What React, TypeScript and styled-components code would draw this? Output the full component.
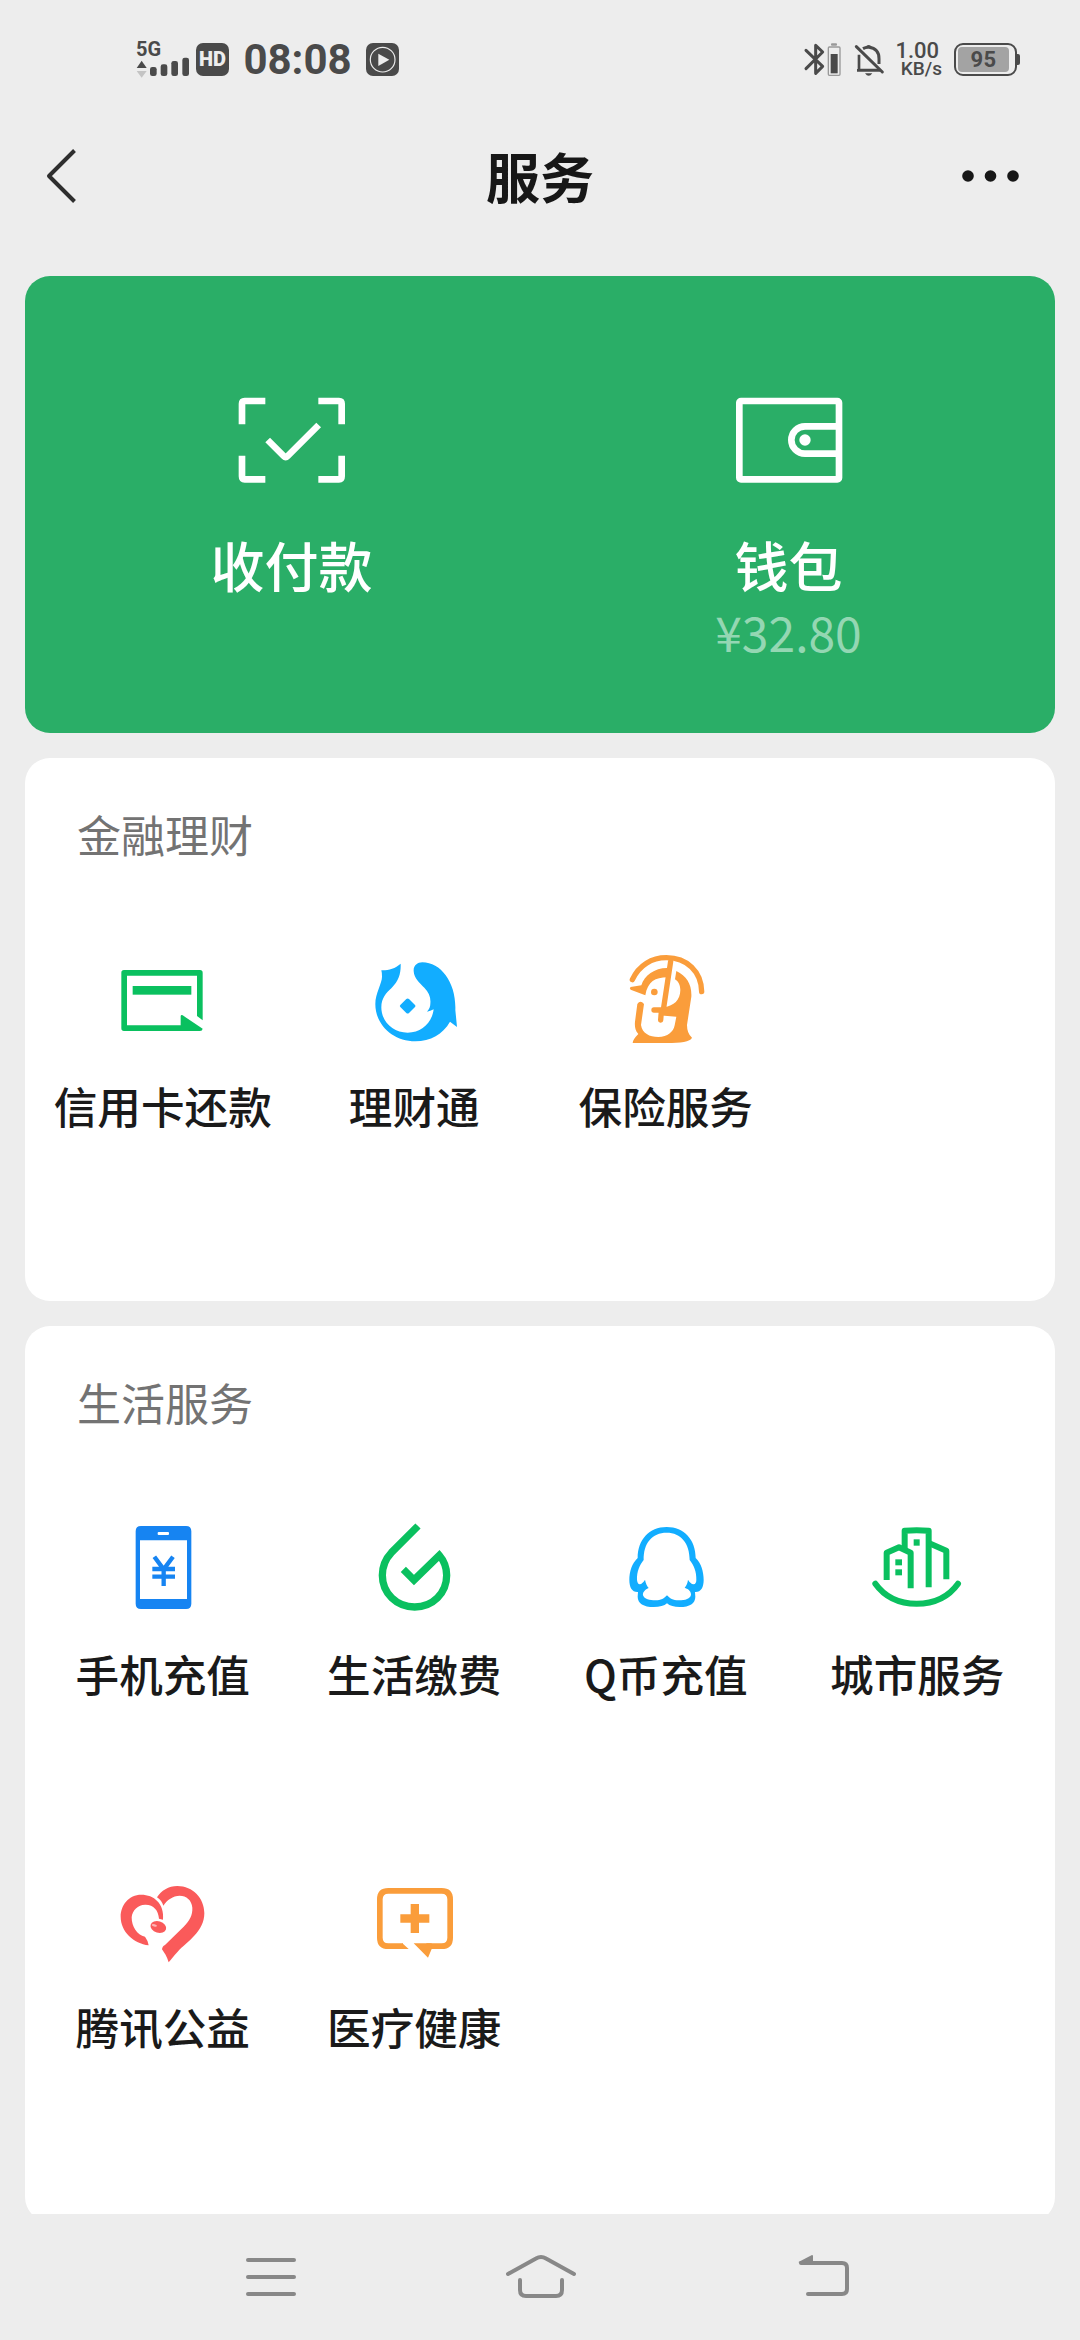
import React from 'react';
import styled, { createGlobalStyle } from 'styled-components';

const GREEN = '#0ac05f';
const BLUE = '#12adff';
const ORANGE = '#fa9d3b';
const INK = '#4a4a4a';

const GlobalStyle = createGlobalStyle`
  * { box-sizing: border-box; }
  body {
    margin: 0;
    background: #ededed;
    font-family: 'Noto Sans CJK SC', 'Noto Sans', sans-serif;
  }
  svg { display: block; flex: none; overflow: visible; }
`;

const Screen = styled.div`
  width: 1080px;
  height: 2340px;
  display: flex;
  flex-direction: column;
  overflow: hidden;
  background: #ededed;
`;

const StatusBar = styled.header`
  flex: none;
  height: 119px;
  padding: 0 60px 0 136px;
  display: flex;
  align-items: center;
  color: ${INK};
  font-family: Roboto, 'Liberation Sans', sans-serif;
`;

const Network = styled.div`
  display: flex;
  flex-direction: column;
  width: 54px;
  margin-right: 6px;
`;

const NetworkType = styled.span`
  height: 16px;
  line-height: 17px;
  font-size: 20px;
  font-weight: 700;
`;

const Badge = styled.span`
  display: flex;
  align-items: center;
  justify-content: center;
  width: 33px;
  height: 33px;
  border-radius: 7px;
  background: ${INK};
  color: #ededed;
  font-size: 20px;
  font-weight: 900;
  line-height: 33px;
`;

const Clock = styled.span`
  width: 137px;
  text-align: center;
  font-size: 42px;
  line-height: 50px;
  font-weight: 700;
`;

const StatusRight = styled.div`
  display: flex;
  align-items: center;
  margin-left: auto;
`;

const Speed = styled.div`
  display: flex;
  flex-direction: column;
  align-items: flex-end;
  width: 48px;
  margin: 0 12px 0 10px;
  font-weight: 500;
`;

const SpeedLine = styled.span<{ $size: number; $inset: number }>`
  height: 18px;
  line-height: 18px;
  font-size: ${(p) => p.$size}px;
  padding-right: ${(p) => p.$inset}px;
  white-space: nowrap;
`;

const Battery = styled.div`
  display: flex;
  align-items: center;
  width: 66px;
`;

const BatteryBody = styled.div`
  width: 63px;
  height: 33px;
  padding: 2px;
  border: 2.5px solid ${INK};
  border-radius: 9px;
`;

const BatteryLevel = styled.div`
  width: 51px;
  height: 25px;
  border-radius: 4px;
  background: #a3a3a3;
  text-align: center;
  font-size: 22px;
  line-height: 25px;
  font-weight: 700;
  letter-spacing: 0.5px;
`;

const BatteryTip = styled.div`
  width: 3px;
  height: 11px;
  background: ${INK};
  border-radius: 0 2px 2px 0;
`;

const TitleBar = styled.div`
  flex: none;
  height: 113px;
  padding: 0 60px 0 46px;
  display: grid;
  grid-template-columns: 74px 1fr 60px;
  align-items: center;
  & > :last-child { justify-self: end; }
`;

const Title = styled.h1`
  margin: 0;
  text-align: center;
  font-size: 54px;
  line-height: 80px;
  font-weight: 700;
  color: #171717;
`;

const Content = styled.main`
  flex: 1;
  min-height: 0;
  display: flex;
  flex-direction: column;
  gap: 25px;
  padding: 44px 25px 0;
  overflow: hidden;
`;

const PayCard = styled.section`
  flex: none;
  height: 457px;
  display: grid;
  grid-template-columns: 1fr 1fr;
  padding: 121px 18px 0;
  border-radius: 25px;
  background: #2aae67;
`;

const PayEntry = styled.div`
  display: flex;
  flex-direction: column;
  align-items: center;
`;

const PayLabel = styled.span`
  margin-top: 46px;
  font-size: 54px;
  line-height: 72px;
  font-weight: 500;
  color: #fff;
`;

const Balance = styled.span`
  margin-top: 3px;
  font-size: 48px;
  line-height: 54px;
  color: #94d7b3;
`;

const Section = styled.section<{ $height: number }>`
  flex: none;
  height: ${(p) => p.$height}px;
  border-radius: 25px;
  background: #fff;
`;

const SectionTitle = styled.h2`
  margin: 0;
  height: 194px;
  padding: 46px 0 0 52px;
  font-size: 44px;
  line-height: 60px;
  font-weight: 400;
  color: #737373;
`;

const Grid = styled.div`
  display: grid;
  grid-template-columns: repeat(4, 1fr);
  grid-auto-rows: 353px;
  padding: 0 12px;
`;

const Tile = styled.div`
  display: flex;
  flex-direction: column;
  align-items: center;
`;

const TileLabel = styled.span`
  margin-top: 27px;
  font-size: 43.6px;
  line-height: 60px;
  font-weight: 500;
  color: #1a1a1a;
  white-space: nowrap;
`;

const NavBar = styled.nav`
  flex: none;
  height: 126px;
  display: grid;
  grid-template-columns: 260px 293px 52px;
  align-items: center;
  padding-left: 245px;
`;

const TileIcon = ({ box, children }: { box: string; children: React.ReactNode }) => (
  <svg width="96" height="96" viewBox={`${box} 288 288`} fill="none">
    {children}
  </svg>
);

const CreditCardIcon = () => (
  <TileIcon box="224 66">
    <g fill={GREEN}>
      <path d="M251 120h228q8 0 8 8v143l-17-13V137H260V286h161v-28q1-4 6-2l60 40q-1 7-8 7H251q-8 0-8-8V128q0-8 8-8z" />
      <rect x="277" y="168" width="176" height="26" />
    </g>
  </TileIcon>
);

const FishIcon = () => (
  <TileIcon box="979 66">
    <g fill={BLUE}>
      <path d="M1148 97C1205 97 1250 160 1247 240L1252 291L1231 275C1210 312 1172 334 1127 334C1060 334 1007 285 1007 222C1007 190 1027 160 1027 140Q1027 128 1025 121C1045 122 1066 116 1083 101C1084 130 1078 152 1055 175C1040 188 1025 205 1025 232C1025 275 1060 308 1104 308C1146 308 1177 278 1182 238Q1172 244 1162 245C1170 236 1172 228 1172 221C1174 203 1168 187 1154 173C1140 159 1123 145 1122 123C1121 107 1133 97 1148 97Z" />
      <path d="M1100 207q4-3 8 0l18 18q3 3 0 6l-18 18q-4 3-8 0l-18-18q-3-3 0-6z" />
    </g>
  </TileIcon>
);

const InsuranceIcon = () => (
  <TileIcon box="233 66">
    <g stroke={ORANGE} strokeWidth="16" strokeLinecap="round">
      <path d="M276 149C296 105 335 83 378 83C440 83 483 125 484 185" />
      <path d="M391 94L369 240H341M363 245L361 270" />
    </g>
    <g fill={ORANGE}>
      <path d="M271 171L303 166C312 135 345 112 385 114L381 142C345 142 322 155 315 196L271 179Q266 175 271 171Z" />
      <circle cx="342" cy="186" r="10" />
      <path d="M408 123C440 138 455 165 453 200L440 285q0 26 15 38c-5 12-35 16-75 16H277q0-10 17-27C283 300 283 285 284 275L291 222q9-14 20 0L302 285c4 25 25 36 52 36c28 0 45-15 49-35L408 260L355 256L372 231C400 228 420 210 420 180C420 163 412 153 404 148Z" />
    </g>
  </TileIcon>
);

const PhoneIcon = () => (
  <TileIcon box="224 60">
    <path
      fill="#1684f2"
      fillRule="evenodd"
      d="M302 78H437q16 0 16 16V311q0 16-16 16H302q-16 0-16-16V94q0-16 16-16zM299 121V297H440V121zM355 96q-3 0-3 3v3q0 3 3 3h28q3 0 3-3v-3q0-3-3-3z"
    />
    <path stroke="#1684f2" strokeWidth="13" d="M342 170L370 208L398 170M370 204V258M336 207H404M336 230H404" />
  </TileIcon>
);

const UtilitiesIcon = () => (
  <TileIcon box="979 60">
    <path
      stroke={GREEN}
      strokeWidth="22"
      strokeMiterlimit="10"
      d="M1135 78L1055 158C1036 178 1028 200 1028 226C1028 280 1071 321 1125 321C1179 321 1221 280 1221 226C1221 200 1212 181 1199 166L1123 240L1091 208"
    />
  </TileIcon>
);

const PenguinIcon = () => (
  <TileIcon box="173 60">
    <path
      fill={BLUE}
      fillRule="evenodd"
      d="M319 81C372 81 406 120 406 174C422 188 430 215 430 240C430 262 422 277 404 276L405 290C405 310 388 321 358 321C342 321 328 318 320 310C312 318 298 321 280 321C250 321 232 310 232 290L233 276C215 277 207 262 207 240C207 215 215 190 232 174C232 120 266 81 319 81ZM319 98C275 98 249 130 250 180C238 195 229 215 230 240C231 248 234 253 238 253C244 252 250 246 254 239C256 250 260 258 265 264C252 270 247 278 248 286C252 298 268 301 285 301C302 301 312 295 320 286C328 295 338 301 355 301C375 301 390 296 392 284C392 274 386 268 373 263C379 256 382 248 383 239C387 246 393 252 400 253C405 252 408 248 408 240C409 215 400 195 388 180C388 130 362 98 319 98Z"
    />
  </TileIcon>
);

const CityIcon = () => (
  <TileIcon box="928 60">
    <g stroke={GREEN} strokeWidth="18" strokeLinejoin="round">
      <path d="M947 251C975 290 1018 311 1071 311C1124 311 1167 290 1195 251" strokeLinecap="round" />
      <path d="M1035 147V92Q1071 89 1107 92V262" />
      <path d="M981 240V158L1018 142L1053 158V265" />
      <path d="M1107 129L1160 152V238" />
    </g>
    <g fill={GREEN}>
      <rect x="1062" y="118" width="18" height="19" />
      <rect x="1007" y="178" width="20" height="18" />
      <rect x="1007" y="208" width="20" height="18" />
    </g>
  </TileIcon>
);

const CharityIcon = () => (
  <TileIcon box="224 39">
    <g fill="#fa5a5a">
      <path d="M368 179C373 130 340 104 303 104C265 104 241 135 241 170C241 215 280 250 325 256Q322 240 314 230C290 225 274 200 274 172C276 150 294 133 316 134C340 135 354 150 356 176Z" />
      <path d="M350 112C362 92 385 78 411 78C458 78 492 115 492 160C492 215 440 245 412 275C400 288 393 297 385 307C380 290 372 278 365 268C366 262 368 258 374 255L430 200C448 182 457 165 456 143C454 120 438 107 418 107C398 107 380 120 369 137C366 127 360 118 350 112Z" />
      <ellipse cx="354" cy="201" rx="24" ry="17" transform="rotate(16 354 201)" />
    </g>
    <ellipse cx="342" cy="196" rx="8" ry="3.5" fill="#fdb5b5" transform="rotate(14 342 196)" />
  </TileIcon>
);

const MedicalIcon = () => (
  <TileIcon box="979 39">
    <path
      stroke={ORANGE}
      strokeWidth="17"
      d="M1090 258.500H1046Q1020.500 258.500 1020.500 233V118Q1020.500 92.500 1046 92.500H1206Q1231.500 92.500 1231.500 118V233Q1231.500 258.500 1206 258.500H1160"
    />
    <g fill={ORANGE}>
      <path d="M1088 250L1107 267H1088zM1122 250H1176V267L1165 293z" />
      <path d="M1113 132h25v31h31v25h-31v31h-25v-31h-31v-25h31z" />
    </g>
  </TileIcon>
);

const ScanPayIcon = () => (
  <svg width="108" height="86" viewBox="173 82 324 258" fill="none" stroke="#fff" strokeWidth="20">
    <path d="M185 164V102Q185 94 193 94H255M414 94H476Q484 94 484 102V164M484 258V320Q484 329 476 329H414M255 329H193Q185 329 185 320V258" />
    <path d="M262 211L310 259Q316 265 322 259L415 166" />
  </svg>
);

const WalletIcon = () => (
  <svg width="108" height="86" viewBox="163 82 324 258" fill="none" stroke="#fff" strokeWidth="20">
    <rect x="176" y="94" width="299" height="235" rx="5" />
    <path d="M475 170H373A41 41 0 0 0 373 252H475" />
    <circle cx="373" cy="211" r="17" fill="#fff" stroke="none" />
  </svg>
);

const SignalIcon = () => (
  <svg width="54" height="21" viewBox="48 111 162 63" fill={INK}>
    <path d="M65 122L80 144H50z" />
    <path d="M65 173L80 153H50z" fill="#c4c4c4" />
    <rect x="90" y="141" width="20" height="27" rx="7" />
    <rect x="122" y="133" width="20" height="35" rx="7" />
    <rect x="154" y="123" width="20" height="45" rx="7" />
    <rect x="187" y="113" width="20" height="55" rx="7" />
  </svg>
);

const PlayBadgeIcon = () => (
  <svg width="33" height="33" viewBox="0 0 99 99">
    <rect width="99" height="99" rx="21" fill={INK} />
    <circle cx="50" cy="50" r="37" fill="none" stroke="#ededed" strokeWidth="3.5" />
    <path d="M37 32L70 50L37 69z" fill="#ededed" />
  </svg>
);

const BluetoothSvg = styled.svg`
  margin-right: 12px;
`;

const BluetoothIcon = () => (
  <BluetoothSvg width="39" height="33" viewBox="73 71 117 99" fill="none" stroke={INK}>
    <path d="M79 93L129 141L108 162V78L129 98L79 148" strokeWidth="9" strokeLinejoin="round" strokeLinecap="round" />
    <rect x="146" y="83" width="35" height="85" rx="3" stroke="#999" strokeWidth="4" />
    <rect x="154" y="72" width="18" height="7" rx="3" fill="#999" stroke="none" />
    <rect x="153" y="104" width="21" height="58" fill={INK} stroke="none" />
  </BluetoothSvg>
);

const MutedBellIcon = () => (
  <svg width="29" height="33" viewBox="225 71 87 99" fill="none" stroke={INK} strokeWidth="9">
    <path d="M237 106V152H292M231 153H300" strokeWidth="8" />
    <path d="M249 88Q258 83 267 84Q297 88 297 118V134" />
    <path d="M229 82L307 158" strokeLinecap="round" />
    <path d="M256 82Q266 72 276 82zM255 162H277Q266 177 255 162z" fill={INK} stroke="none" />
  </svg>
);

const BackChevronIcon = () => (
  <svg width="30" height="54" viewBox="0 0 30 54" fill="none" stroke="#2e2e2e" strokeWidth="4">
    <path d="M28.500 1.500L3 27L28.500 52.500" strokeLinejoin="round" />
  </svg>
);

const MoreIcon = () => (
  <svg width="58" height="12" viewBox="0 0 58 12" fill="#171717">
    <circle cx="6" cy="6" r="5.800" />
    <circle cx="28.500" cy="6" r="5.800" />
    <circle cx="51" cy="6" r="5.800" />
  </svg>
);

const NavMenuIcon = () => (
  <svg width="52" height="44" viewBox="0 0 52 44" stroke="#888" strokeWidth="4" strokeLinecap="round">
    <path d="M3 5H49M3 22H49M3 39H49" />
  </svg>
);

const NavHomeIcon = () => (
  <svg width="72" height="44" viewBox="505 2255 72 44" fill="none" stroke="#888" strokeWidth="4" strokeLinecap="round">
    <path d="M508 2274L536 2258.500Q541 2255.500 546 2258.500L574 2274" />
    <path d="M520 2280V2290Q520 2296 526 2296H556Q562 2296 562 2290V2280" />
  </svg>
);

const NavBackIcon = () => (
  <svg width="52" height="44" viewBox="798 2255 52 44" fill="none" stroke="#888" strokeWidth="4" strokeLinecap="round">
    <path d="M801 2263H842Q847 2263 847 2268V2289Q847 2294 842 2294H808" />
    <path d="M798.500 2262L812 2255Q813 2255 813 2256V2264H800z" fill="#888" stroke="none" />
  </svg>
);

type Service = { label: string; Icon: React.ComponentType };

const finance: Service[] = [
  { label: '信用卡还款', Icon: CreditCardIcon },
  { label: '理财通', Icon: FishIcon },
  { label: '保险服务', Icon: InsuranceIcon },
];

const living: Service[] = [
  { label: '手机充值', Icon: PhoneIcon },
  { label: '生活缴费', Icon: UtilitiesIcon },
  { label: 'Q币充值', Icon: PenguinIcon },
  { label: '城市服务', Icon: CityIcon },
  { label: '腾讯公益', Icon: CharityIcon },
  { label: '医疗健康', Icon: MedicalIcon },
];

const ServiceGrid = ({ items }: { items: Service[] }) => (
  <Grid>
    {items.map(({ label, Icon }) => (
      <Tile key={label}>
        <Icon />
        <TileLabel>{label}</TileLabel>
      </Tile>
    ))}
  </Grid>
);

export default function App() {
  return (
    <>
      <GlobalStyle />
      <Screen>
        <StatusBar>
          <Network>
            <NetworkType>5G</NetworkType>
            <SignalIcon />
          </Network>
          <Badge>HD</Badge>
          <Clock>08:08</Clock>
          <PlayBadgeIcon />
          <StatusRight>
            <BluetoothIcon />
            <MutedBellIcon />
            <Speed>
              <SpeedLine $size={22} $inset={3}>1.00</SpeedLine>
              <SpeedLine $size={19} $inset={0}>KB/s</SpeedLine>
            </Speed>
            <Battery>
              <BatteryBody>
                <BatteryLevel>95</BatteryLevel>
              </BatteryBody>
              <BatteryTip />
            </Battery>
          </StatusRight>
        </StatusBar>

        <TitleBar>
          <BackChevronIcon />
          <Title>服务</Title>
          <MoreIcon />
        </TitleBar>

        <Content>
          <PayCard>
            <PayEntry>
              <ScanPayIcon />
              <PayLabel>收付款</PayLabel>
            </PayEntry>
            <PayEntry>
              <WalletIcon />
              <PayLabel>钱包</PayLabel>
              <Balance>¥32.80</Balance>
            </PayEntry>
          </PayCard>

          <Section $height={543}>
            <SectionTitle>金融理财</SectionTitle>
            <ServiceGrid items={finance} />
          </Section>

          <Section $height={896}>
            <SectionTitle>生活服务</SectionTitle>
            <ServiceGrid items={living} />
          </Section>
        </Content>

        <NavBar>
          <NavMenuIcon />
          <NavHomeIcon />
          <NavBackIcon />
        </NavBar>
      </Screen>
    </>
  );
}
